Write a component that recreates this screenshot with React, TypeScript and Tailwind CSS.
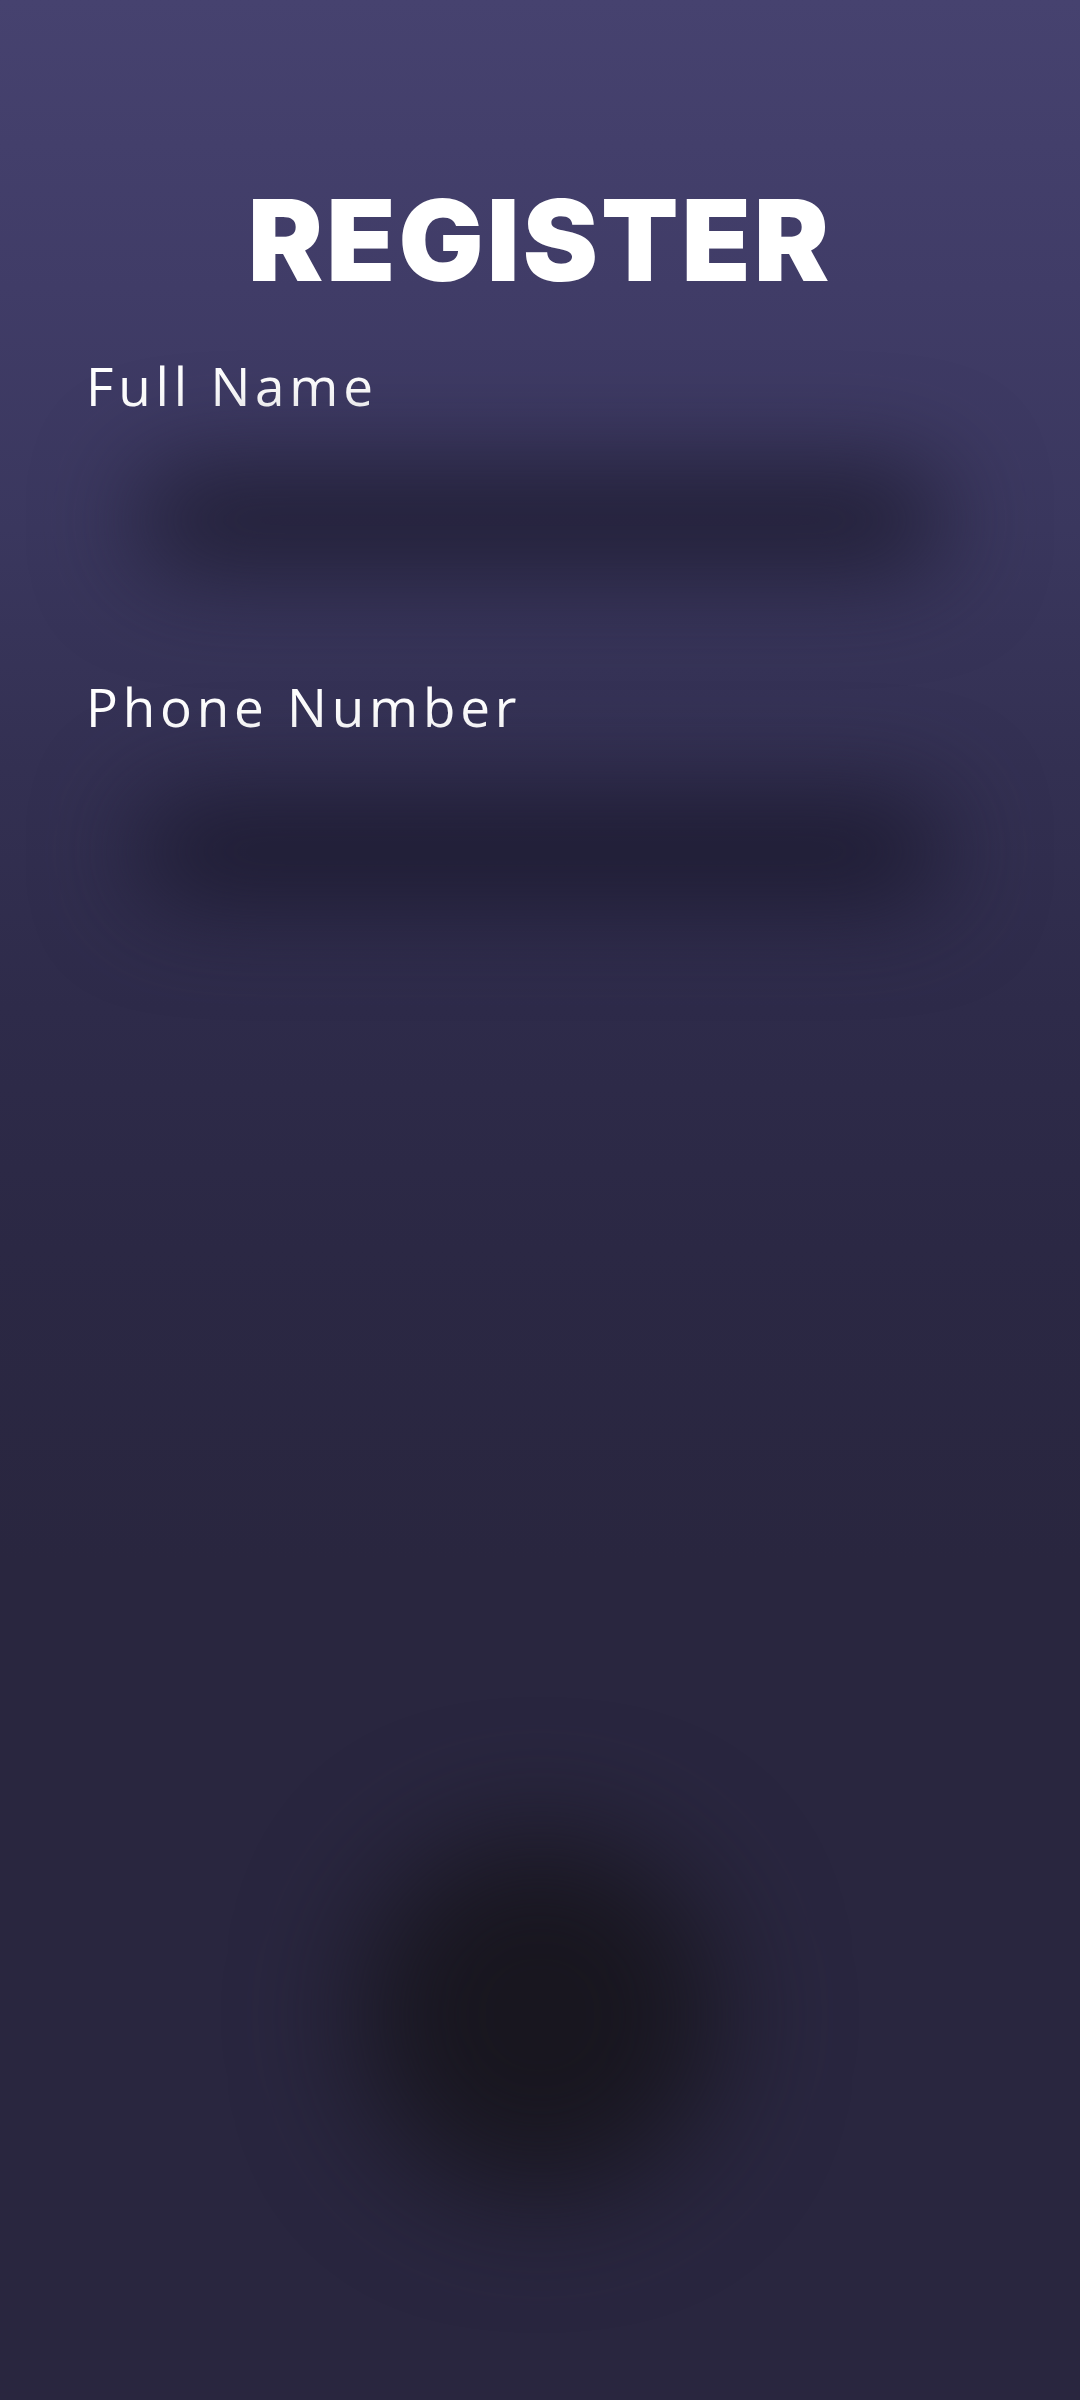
import React from "react";

export default function App() {
  return (
    <div className="relative w-[1080px] h-[2400px] overflow-hidden bg-[linear-gradient(to_bottom,#46426f_0%,#403c67_12%,#3a375e_22%,#333052_32%,#2e2b4a_42%,#2b2844_52%,#29263f_65%,#29263f_100%)]">
      <div className="flex flex-col">
        <h1
          className="mt-[184px] text-center text-white text-[113px] leading-none font-black tracking-[3px]"
          style={{ fontFamily: "Inter, 'Open Sans', sans-serif" }}
        >
          REGISTER
        </h1>

        <div className="mt-[62px] flex flex-col px-[86px]" style={{ fontFamily: "'Open Sans', sans-serif" }}>
          <label className="text-white text-[53px] leading-none tracking-[4.8px]">Full Name</label>
          <div className="mt-[58px] mx-[50px] h-[100px] rounded-[50px] bg-[#1f1d33] blur-[50px]" />

          <label className="mt-[110px] text-white text-[53px] leading-none tracking-[4.8px]">Phone Number</label>
          <div className="mt-[68px] mx-[50px] h-[100px] rounded-[50px] bg-[#1c1a30] blur-[50px]" />
        </div>

        <div className="mt-[934px] flex justify-center">
          <div className="w-[360px] h-[360px] rounded-full bg-[#18161f] blur-[60px]" />
        </div>
      </div>
    </div>
  );
}
